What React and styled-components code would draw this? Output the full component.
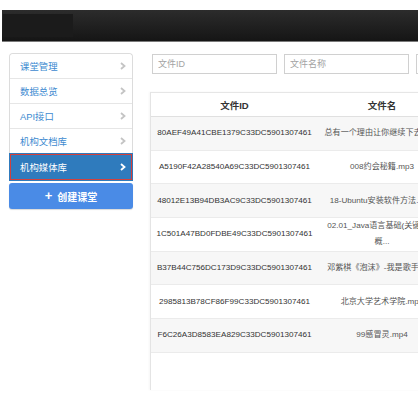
import React from 'react';
import styled, { createGlobalStyle } from 'styled-components';

const GlobalStyle = createGlobalStyle`
  html, body {
    margin: 0;
    background: #fff;
    overflow: hidden;
  }
  body {
    font-family: "Liberation Sans", "Noto Sans CJK SC", sans-serif;
  }
`;

const Page = styled.div`
  padding-top: 10px;
  width: 418px;
  height: 416px;
  box-sizing: border-box;
  overflow: hidden;
`;

const TopBar = styled.div`
  height: 31px;
  margin-left: 2px;
  background: linear-gradient(#2c2c2c, #151515);
  border-bottom: 1px solid #7a7a7a;
  display: flex;
  align-items: center;
`;

const Brand = styled.div`
  width: 70px;
  height: 23px;
  margin-left: 1px;
  background: #1b1b1b;
`;

const Main = styled.div`
  display: flex;
  align-items: flex-start;
  padding-left: 9px;
  width: max-content;
`;

const Sidebar = styled.div`
  width: 124px;
  margin-top: 11px;
`;

const NavList = styled.div`
  border: 1px solid #dcdcdc;
  border-bottom: none;
  border-radius: 4px 4px 0 0;
`;

const NavItem = styled.div`
  height: 25px;
  box-sizing: border-box;
  display: flex;
  align-items: center;
  justify-content: space-between;
  padding: 0 6px 0 10px;
  font-size: 9.4px;
  color: #3d8ad0;
  background: #fff;
  border-bottom: 1px solid #e6e6e6;
  &:first-child {
    border-radius: 4px 4px 0 0;
  }
`;

const ActiveItem = styled(NavItem)`
  height: 26px;
  margin: 0 0 0 0;
  padding: 0 5px 0 9px;
  color: #fff;
  background: #2f7bbd;
  border: 1px solid #d2403c;
  box-shadow: 0 0 0 1px #2f7bbd;
`;

const Chevron = ({ color }) => (
  <svg width="6" height="8" viewBox="0 0 6 8">
    <polyline points="1,1 4.5,4 1,7" fill="none" stroke={color} strokeWidth="1.8" />
  </svg>
);

const CreateButton = styled.div`
  margin-top: 3px;
  height: 26px;
  border-radius: 3px;
  background: #4a8be6;
  box-shadow: 0 1px 1px rgba(0, 0, 0, 0.15);
  color: #fff;
  font-size: 10px;
  font-weight: bold;
  display: flex;
  align-items: center;
  justify-content: center;
  gap: 5px;
`;

const Plus = styled.span`
  font-size: 13px;
  line-height: 1;
  margin-top: -1px;
`;

const Content = styled.div`
  margin-left: 17px;
  display: flex;
  flex-direction: column;
`;

const SearchRow = styled.div`
  margin-top: 12px;
  margin-left: 2px;
  display: flex;
  gap: 7px;
`;

const SearchInput = styled.input`
  width: 125px;
  height: 20px;
  box-sizing: border-box;
  border: 1px solid #d0d0d0;
  padding: 0 5px;
  font-family: "Liberation Sans", "Noto Sans CJK SC", sans-serif;
  font-size: 9px;
  outline: none;
  &::placeholder {
    color: #a3a3a3;
  }
`;

const Panel = styled.div`
  margin-top: 18px;
  height: 298px;
  border-left: 1px solid #e4e4e4;
  box-shadow: -1px 0 2px rgba(0, 0, 0, 0.04);
`;

const Table = styled.table`
  border-collapse: collapse;
  table-layout: fixed;
  width: 295px;
  border-top: 1px solid #e6e6e6;
`;

const HeadCell = styled.th`
  width: ${(p) => p.$w}px;
  height: 23px;
  padding: 0;
  font-size: 9.5px;
  font-weight: bold;
  color: #333;
  text-align: center;
  border-bottom: 1px solid #e0e0e0;
  background: #fff;
`;

const Row = styled.tr`
  background: ${(p) => (p.$odd ? '#f7f7f7' : '#fff')};
  border-bottom: 1px solid #ebebeb;
`;

const Cell = styled.td`
  height: 32.7px;
  padding: 0 5px;
  font-size: 8.1px;
  line-height: 16px;
  text-align: center;
  color: ${(p) => (p.$muted ? '#555' : '#333')};
  white-space: ${(p) => (p.$nowrap ? 'nowrap' : 'normal')};
  overflow: hidden;
`;

const navItems = ['课堂管理', '数据总览', 'API接口', '机构文档库'];
const activeItem = '机构媒体库';

const files = [
  ['80AEF49A41CBE1379C33DC5901307461', '总有一个理由让你继续下去.mp3'],
  ['A5190F42A28540A69C33DC5901307461', '008约会秘籍.mp3'],
  ['48012E13B94DB3AC9C33DC5901307461', '18-Ubuntu安装软件方法.mp4'],
  ['1C501A47BD0FDBE49C33DC5901307461', <>02.01_Java语言基础(关键字的<br />概...</>],
  ['B37B44C756DC173D9C33DC5901307461', '邓紫棋《泡沫》-我是歌手.mp3'],
  ['2985813B78CF86F99C33DC5901307461', '北京大学艺术学院.mp4'],
  ['F6C26A3D8583EA829C33DC5901307461', '99感冒灵.mp4'],
];

export default function App() {
  return (
    <Page>
      <GlobalStyle />
      <TopBar>
        <Brand />
      </TopBar>
      <Main>
        <Sidebar>
          <NavList>
            {navItems.map((label) => (
              <NavItem key={label}>
                <span>{label}</span>
                <Chevron color="#c4c4c4" />
              </NavItem>
            ))}
            <ActiveItem>
              <span>{activeItem}</span>
              <Chevron color="#fff" />
            </ActiveItem>
          </NavList>
          <CreateButton>
            <Plus>+</Plus>
            <span>创建课堂</span>
          </CreateButton>
        </Sidebar>
        <Content>
          <SearchRow>
            <SearchInput placeholder="文件ID" />
            <SearchInput placeholder="文件名称" />
            <SearchInput placeholder="" />
          </SearchRow>
          <Panel>
            <Table>
              <thead>
                <tr>
                  <HeadCell $w={167}>文件ID</HeadCell>
                  <HeadCell $w={128}>文件名</HeadCell>
                </tr>
              </thead>
              <tbody>
                {files.map(([id, name], i) => (
                  <Row key={id} $odd={i % 2 === 0}>
                    <Cell $nowrap>{id}</Cell>
                    <Cell $muted>{name}</Cell>
                  </Row>
                ))}
              </tbody>
            </Table>
          </Panel>
        </Content>
      </Main>
    </Page>
  );
}
